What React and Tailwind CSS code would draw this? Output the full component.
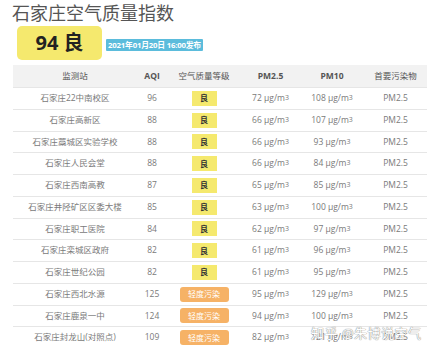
import React from "react";

const rows = [
  ["石家庄22中南校区", 96, 0, 72, 108],
  ["石家庄高新区", 88, 0, 66, 107],
  ["石家庄藁城区实验学校", 88, 0, 66, 93],
  ["石家庄人民会堂", 88, 0, 66, 84],
  ["石家庄西南高教", 87, 0, 65, 85],
  ["石家庄井陉矿区区委大楼", 85, 0, 63, 100],
  ["石家庄职工医院", 84, 0, 62, 97],
  ["石家庄栾城区政府", 82, 0, 61, 96],
  ["石家庄世纪公园", 82, 0, 61, 95],
  ["石家庄西北水源", 125, 1, 95, 129],
  ["石家庄鹿泉一中", 124, 1, 94, 100],
  ["石家庄封龙山(对照点)", 109, 1, 82, 121],
];

const Unit = ({ v }) => (
  <span>
    {v} μg/m<sup className="text-[7px] relative -top-[1px]">3</sup>
  </span>
);

export default function App() {
  return (
    <div
      className="w-[432px] h-[354px] bg-white overflow-hidden relative"
      style={{ fontFamily: '"Open Sans", "Noto Sans CJK SC", sans-serif' }}
    >
      <div className="pl-[12px] pt-[1px] text-[18px] leading-[24px] text-[#555]">
        石家庄空气质量指数
      </div>
      <div className="flex items-center pl-[17px] mt-[1px]">
        <div className="w-[85px] h-[34px] rounded-[5px] bg-[#f5e96e] flex items-center justify-center text-[20px] font-bold text-[#222]">
          94 良
        </div>
        <div className="ml-[4px] mt-[3px] h-[12px] px-[2px] bg-[#5bbcdc] text-white text-[7.8px] font-bold leading-[12px] rounded-[1px] tracking-[-0.2px]">
          2021年01月20日 16:00发布
        </div>
      </div>
      <div className="ml-[13px] mt-[5px] w-[414px]">
        <div className="grid grid-cols-[124px_30px_74px_59px_64px_63px] h-[22px] bg-[#f2f2f2] items-center text-center text-[8.5px] text-[#555]">
          <div>监测站</div>
          <div className="font-bold">AQI</div>
          <div>空气质量等级</div>
          <div className="font-bold">PM2.5</div>
          <div className="font-bold">PM10</div>
          <div>首要污染物</div>
        </div>
        {rows.map((r, i) => (
          <div
            key={i}
            className="grid grid-cols-[124px_30px_74px_59px_64px_63px] h-[21.75px] border-t border-[#e6e6e6] items-center text-center text-[8.5px] text-[#7a7a7a]"
          >
            <div>{r[0]}</div>
            <div>{r[1]}</div>
            <div className="flex justify-center">
              {r[2] === 0 ? (
                <span className="w-[25px] h-[15px] bg-[#f5e96e] text-[#333] font-bold flex items-center justify-center text-[8px]">
                  良
                </span>
              ) : (
                <span className="w-[49px] h-[15px] rounded-[3px] bg-[#f6b266] text-white flex items-center justify-center text-[8px]">
                  轻度污染
                </span>
              )}
            </div>
            <div><Unit v={r[3]} /></div>
            <div><Unit v={r[4]} /></div>
            <div>PM2.5</div>
          </div>
        ))}
      </div>
      <div
        className="absolute left-[311px] top-[324px] text-[13px] text-white tracking-[0.5px]"
        style={{ textShadow: "0 0 1px #888, 0 0 1px #888" }}
      >
        知乎 @朱博说空气
      </div>
    </div>
  );
}
